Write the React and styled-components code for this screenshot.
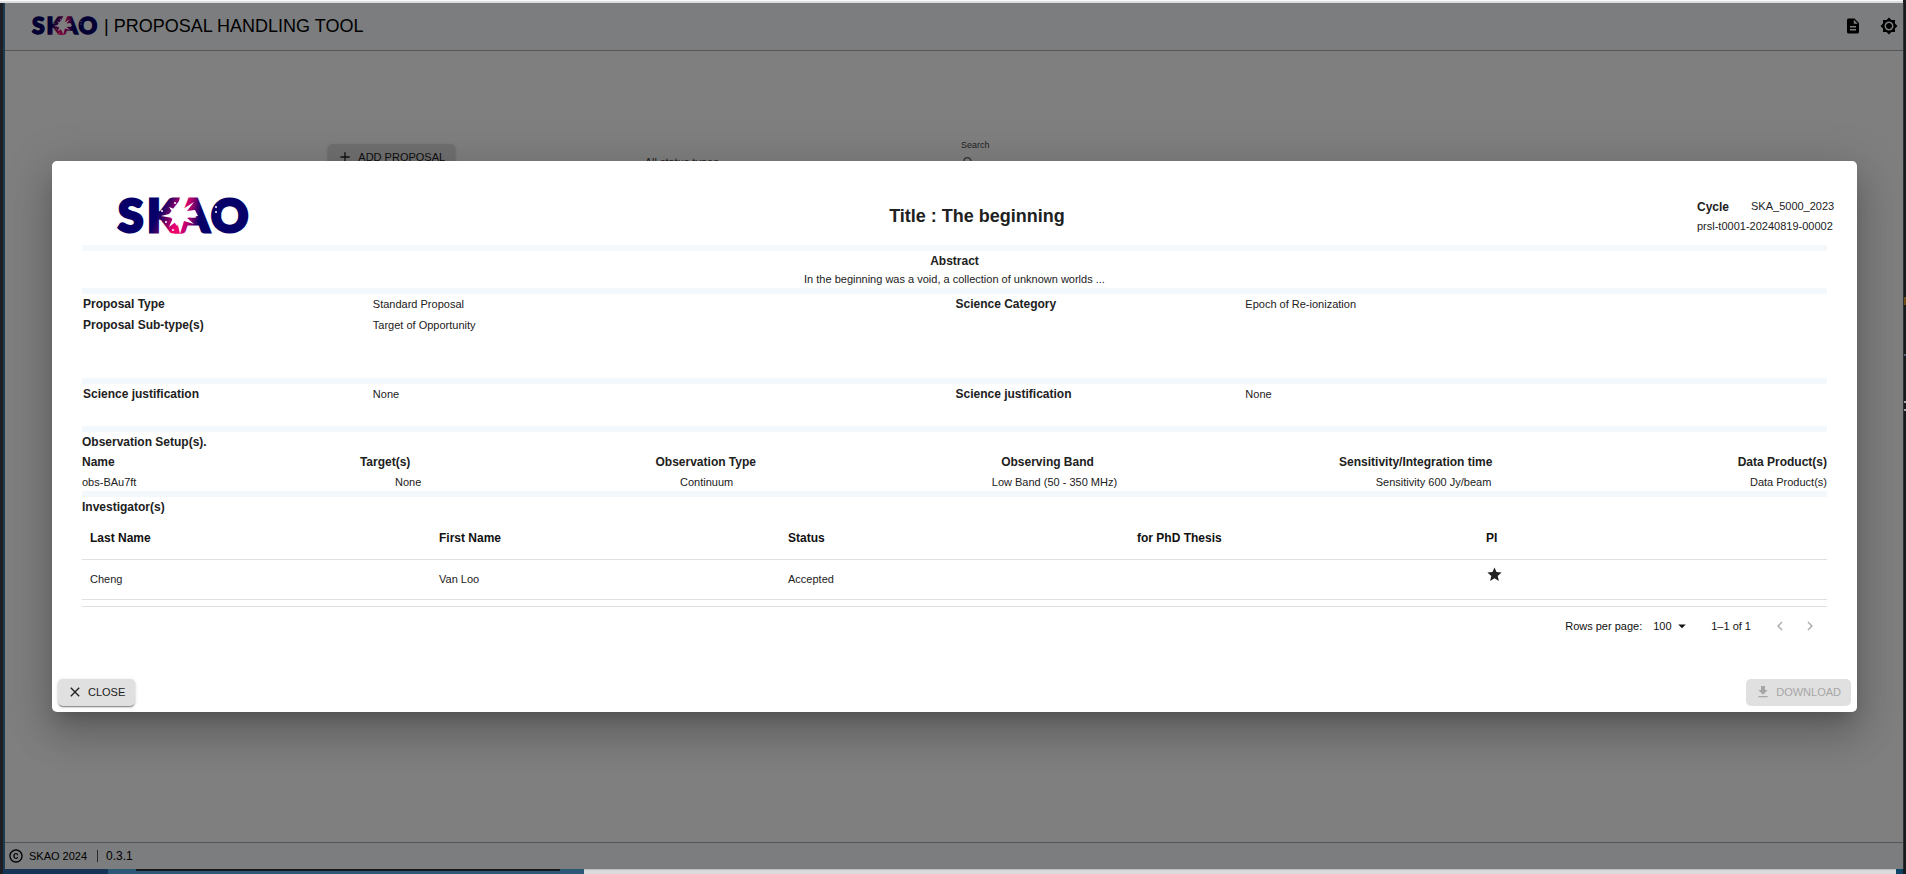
import React from 'react';
import styled, { createGlobalStyle } from 'styled-components';
import {
  MdAdd,
  MdArrowDropDown,
  MdBrightness7,
  MdChevronLeft,
  MdChevronRight,
  MdClose,
  MdCopyright,
  MdDescription,
  MdGetApp,
  MdSearch,
  MdStar,
} from 'react-icons/md';

const GlobalStyle = createGlobalStyle`
  *, *::before, *::after { box-sizing: border-box; }
  body {
    margin: 0;
    font-family: "Liberation Sans", Arial, sans-serif;
    font-size: 11px;
    color: #212121;
  }
  button, input, select { font: inherit; color: inherit; }
`;

/* Window frame around the app */
const Desktop = styled.div`
  display: grid;
  grid-template-columns: 5px minmax(0, 1fr) 3px;
  grid-template-rows: 3px minmax(0, 1fr) 5px;
  min-height: 100vh;
  background: #1d1f24;
`;

const TopEdge = styled.div`
  grid-column: 1 / 3;
  background: linear-gradient(#fafafa 1px, #dedede 1px);
`;

const LeftEdge = styled.div`
  grid-column: 1;
  grid-row: 2;
  border-right: 2px solid #1c3a50;
`;

const RightEdge = styled.div`
  grid-column: 3;
  grid-row: 2;
  background: linear-gradient(
    #181b1d 294px, #6b4d17 294px 302px, #181b1d 302px 351px,
    #56617a 351px 353px, #181b1d 353px 398px, #a5a5a5 398px 400px,
    #181b1d 400px 406px, #a5a5a5 406px 408px, #181b1d 408px
  );
  border-left: 1px solid #2a3033;
`;

const BottomEdge = styled.div`
  grid-column: 1 / -1;
  display: flex;
  padding-left: 3px;
`;

const EdgePart = styled.div`
  flex: ${(p) => (p.$width ? `0 0 ${p.$width}px` : '1')};
  background: ${(p) => p.$color};
`;

const TaskPart = styled(EdgePart)`
  padding: 0 24px 0 28px;
  &::before {
    content: '';
    display: block;
    height: 2px;
    background: #14181c;
  }
`;

/* Page */
const Page = styled.div`
  grid-column: 2;
  grid-row: 2;
  position: relative;
  display: flex;
  flex-direction: column;
  background: #fff;
  color: #000;
`;

const AppHeader = styled.header`
  display: flex;
  align-items: center;
  height: 48px;
  padding: 0 0 2px 27px;
  background: #f8fafc;
  border-bottom: 1px solid #aaa;
`;

const AppName = styled.h1`
  flex: 1;
  margin: 0 0 0 7px;
  font-size: 18px;
  line-height: 24px;
  font-weight: 400;
`;

const HeaderActions = styled.div`
  display: flex;
  gap: 8px;
`;

const IconButton = styled.button`
  display: inline-flex;
  align-items: center;
  justify-content: center;
  padding: 0;
  width: ${(p) => p.$size}px;
  height: ${(p) => p.$size}px;
  border: 0;
  background: none;
  color: ${(p) => (p.disabled ? '#b0b0b0' : 'inherit')};
`;

const Toolbar = styled.div`
  flex: 1;
  display: grid;
  grid-template-columns: repeat(6, minmax(0, 1fr));
  align-items: start;
  padding-top: 88px;
`;

const ToolbarCell = styled.div`
  grid-column: ${(p) => p.$column};
  padding: ${(p) => p.$top}px 8px 0 7px;
`;

const StatusSelect = styled.select`
  appearance: none;
  padding: 0;
  border: 0;
  background: none;
  line-height: 16px;
  color: #444;
`;

const SearchLabel = styled.label`
  display: block;
  font-size: 9px;
  line-height: 12px;
  color: #444;
`;

const SearchRow = styled.div`
  display: flex;
  align-items: center;
  padding-top: 4px;
  color: #666;
`;

const SearchInput = styled.input`
  width: 160px;
  border: 0;
  background: none;
`;

const Button = styled.button`
  display: inline-flex;
  align-items: center;
  gap: 5px;
  height: 27px;
  padding: 0 10px 1px 9px;
  border: 0;
  border-radius: 5px;
  background: #e0e0e0;
  color: ${(p) => (p.disabled ? '#a6a6a6' : '#212121')};
  text-transform: uppercase;
  box-shadow: ${(p) =>
    p.disabled
      ? 'none'
      : '0 2px 1px -1px rgba(0,0,0,.3), 0 1px 2px rgba(0,0,0,.2), 0 1px 4px rgba(0,0,0,.12)'};
`;

const AppFooter = styled.footer`
  display: flex;
  align-items: center;
  height: 27px;
  padding-left: 3px;
  background: #f8fafc;
  border-top: 1px solid #aaa;
`;

const Copyright = styled.span`
  margin: 0 10px 0 5px;
`;

const Version = styled.span`
  padding-left: 8px;
  border-left: 1px solid #555;
  font-size: 12px;
  line-height: 12px;
`;

/* Dialog */
const Backdrop = styled.div`
  position: absolute;
  inset: 0;
  display: flex;
  align-items: center;
  padding: 0 46px 0 47px;
  background: rgba(0, 0, 0, 0.5);
  color: #212121;
`;

const Dialog = styled.section`
  flex: 1;
  min-width: 0;
  background: #fff;
  border-radius: 5px;
  box-shadow: 0 11px 15px -7px rgba(0, 0, 0, 0.2),
    0 24px 38px 3px rgba(0, 0, 0, 0.14), 0 9px 46px 8px rgba(0, 0, 0, 0.12);
`;

const DialogBody = styled.div`
  padding: 26px 30px 34px;
`;

const DialogHeader = styled.div`
  display: flex;
  align-items: center;
  justify-content: space-between;
  height: 58px;
`;

const LogoBox = styled.div`
  display: flex;
  padding: 0 9px 0 36px;
`;

const LogoImage = styled.svg`
  overflow: visible;
`;

const DialogTitle = styled.h2`
  margin: 0;
  font-size: 18px;
  line-height: 24px;
  font-weight: 700;
`;

const Reference = styled.div`
  width: 130px;
  line-height: 18px;
  white-space: nowrap;
`;

const CycleRow = styled.div`
  display: flex;
  gap: 22px;
`;

const Rule = styled.hr`
  height: 6px;
  margin: 0;
  border: 0;
  background: #f3f8fd;
`;

const Heading = styled.h3`
  margin: 0;
  font-size: 12px;
  line-height: 20px;
  font-weight: 700;
`;

const Abstract = styled.div`
  text-align: center;
`;

const AbstractText = styled.p`
  margin: 0;
  line-height: 17px;
`;

const Details = styled.dl`
  display: grid;
  grid-template-columns: 2fr 4fr 2fr 4fr;
  align-content: start;
  height: ${(p) => p.$rows * 42}px;
  margin: 0;
  line-height: 21px;
`;

const Term = styled.dt`
  padding-left: 1px;
  font-size: 12px;
  font-weight: 700;
`;

const Value = styled.dd`
  margin: 0;
`;

const SetupTable = styled.table`
  display: block;
  thead, tbody { display: block; }
  tr { display: flex; justify-content: space-between; }
  th { padding: 0; font-size: 12px; line-height: 21px; }
  td { padding: 0; line-height: 18px; }
`;

const PeopleTable = styled.table`
  width: 100%;
  table-layout: fixed;
  border-collapse: separate;
  border-spacing: 0;
  border-bottom: 1px solid #e0e0e0;
  padding-bottom: 6px;
  text-align: left;
  th, td { padding: 0 8px; border-bottom: 1px solid #e0e0e0; }
  th { height: 43px; font-size: 12px; color: #111; }
  td { height: 40px; }
`;

const StarCell = styled.div`
  display: flex;
  padding-bottom: 9px;
`;

const Pagination = styled.div`
  display: flex;
  align-items: center;
  justify-content: flex-end;
  height: 38px;
  padding-right: 2px;
  color: #111;
`;

const PageSize = styled.div`
  display: flex;
  align-items: center;
  margin: 0 20px 0 11px;
`;

const PageSizeSelect = styled.select`
  appearance: none;
  width: 20px;
  padding: 0;
  border: 0;
  background: none;
`;

const Range = styled.span`
  margin-right: 14px;
`;

const DialogActions = styled.div`
  display: flex;
  justify-content: space-between;
  padding: 0 6px 6px;
`;

function Logo({ id, width }) {
  return (
    <LogoImage width={width} viewBox="0 0 130 36" role="img" aria-label="SKAO">
      <defs>
        <linearGradient id={`${id}-k`} gradientUnits="userSpaceOnUse" x1="40" y1="16" x2="62" y2="26">
          <stop offset="0" stopColor="#070068" />
          <stop offset="0.3" stopColor="#4a0365" />
          <stop offset="0.8" stopColor="#e6006e" />
          <stop offset="1" stopColor="#f0046c" />
        </linearGradient>
        <linearGradient id={`${id}-a`} gradientUnits="userSpaceOnUse" x1="64" y1="15" x2="82" y2="18">
          <stop offset="0" stopColor="#f0046c" />
          <stop offset="0.45" stopColor="#a8006c" />
          <stop offset="1" stopColor="#070068" />
        </linearGradient>
      </defs>
      <g fontFamily="Lato, 'Open Sans', sans-serif" fontWeight="900" fontSize="46" strokeWidth="3">
        <text x="0" y="34" fill="#070068" stroke="#070068">S</text>
        <text x="29" y="34" fill={`url(#${id}-k)`} stroke={`url(#${id}-k)`}>K</text>
        <text x="59" y="34" fill={`url(#${id}-a)`} stroke={`url(#${id}-a)`}>A</text>
        <text x="93" y="34" fill="#070068" stroke="#070068">O</text>
      </g>
      <path
        fill="#fff"
        d="M62 -1H67L65 11L76 4L69 13L77 12L80 18L69 20L76 26L66 23L62 36L59 23L51 29L55 20L43 18L55 15L51 9L59 12Z"
      />
      <g fill="#fff">
        <circle cx="57" cy="5" r="1" />
        <circle cx="44" cy="13" r="1" />
        <circle cx="55" cy="32" r="1" />
        <circle cx="98" cy="9" r="1" />
        <circle cx="98" cy="14" r="1" />
        <circle cx="48" cy="24" r="1" />
      </g>
    </LogoImage>
  );
}

const setupColumns = [
  ['Name', 'obs-BAu7ft'],
  ['Target(s)', 'None'],
  ['Observation Type', 'Continuum'],
  ['Observing Band', 'Low Band (50 - 350 MHz)'],
  ['Sensitivity/Integration time', 'Sensitivity 600 Jy/beam'],
  ['Data Product(s)', 'Data Product(s)'],
];

const peopleColumns = ['Last Name', 'First Name', 'Status', 'for PhD Thesis', 'PI'];

export default function App() {
  return (
    <Desktop>
      <GlobalStyle />
      <TopEdge />
      <LeftEdge />
      <Page>
        <AppHeader>
          <Logo id="app" width={65} />
          <AppName>| PROPOSAL HANDLING TOOL</AppName>
          <HeaderActions>
            <IconButton $size={28} aria-label="Documentation"><MdDescription size={18} /></IconButton>
            <IconButton $size={28} aria-label="Theme"><MdBrightness7 size={18} /></IconButton>
          </HeaderActions>
        </AppHeader>
        <Toolbar>
          <ToolbarCell $column={2} $top={5}>
            <Button><MdAdd size={16} />Add proposal</Button>
          </ToolbarCell>
          <ToolbarCell $column={3} $top={15}>
            <StatusSelect aria-label="Status">
              <option>All status types</option>
            </StatusSelect>
          </ToolbarCell>
          <ToolbarCell $column={4} $top={0}>
            <SearchLabel htmlFor="search">Search</SearchLabel>
            <SearchRow>
              <MdSearch size={16} />
              <SearchInput id="search" />
            </SearchRow>
          </ToolbarCell>
        </Toolbar>
        <AppFooter>
          <MdCopyright size={16} />
          <Copyright>SKAO 2024</Copyright>
          <Version>0.3.1</Version>
        </AppFooter>

        <Backdrop>
          <Dialog role="dialog" aria-modal="true" aria-labelledby="dialog-title">
            <DialogBody>
              <DialogHeader>
                <LogoBox><Logo id="dialog" width={130} /></LogoBox>
                <DialogTitle id="dialog-title">Title : The beginning</DialogTitle>
                <Reference>
                  <CycleRow>
                    <Heading as="span">Cycle</Heading>
                    <span>SKA_5000_2023</span>
                  </CycleRow>
                  <div>prsl-t0001-20240819-00002</div>
                </Reference>
              </DialogHeader>
              <Rule />
              <Abstract>
                <Heading>Abstract</Heading>
                <AbstractText>
                  In the beginning was a void, a collection of unknown worlds ...
                </AbstractText>
              </Abstract>
              <Rule />
              <Details $rows={2}>
                <Term>Proposal Type</Term>
                <Value>Standard Proposal</Value>
                <Term>Science Category</Term>
                <Value>Epoch of Re-ionization</Value>
                <Term>Proposal Sub-type(s)</Term>
                <Value>Target of Opportunity</Value>
              </Details>
              <Rule />
              <Details $rows={1}>
                <Term>Science justification</Term>
                <Value>None</Value>
                <Term>Science justification</Term>
                <Value>None</Value>
              </Details>
              <Rule />
              <Heading>Observation Setup(s).</Heading>
              <SetupTable>
                <thead>
                  <tr>{setupColumns.map(([name]) => <th key={name}>{name}</th>)}</tr>
                </thead>
                <tbody>
                  <tr>{setupColumns.map(([name, value]) => <td key={name}>{value}</td>)}</tr>
                </tbody>
              </SetupTable>
              <Rule />
              <Heading>Investigator(s)</Heading>
              <PeopleTable>
                <thead>
                  <tr>{peopleColumns.map((name) => <th key={name}>{name}</th>)}</tr>
                </thead>
                <tbody>
                  <tr>
                    <td>Cheng</td>
                    <td>Van Loo</td>
                    <td>Accepted</td>
                    <td />
                    <td><StarCell><MdStar size={17} aria-label="Principal investigator" /></StarCell></td>
                  </tr>
                </tbody>
              </PeopleTable>
              <Pagination>
                <label htmlFor="page-size">Rows per page:</label>
                <PageSize>
                  <PageSizeSelect id="page-size">
                    <option>100</option>
                  </PageSizeSelect>
                  <MdArrowDropDown size={18} />
                </PageSize>
                <Range>1–1 of 1</Range>
                <IconButton $size={30} disabled aria-label="Previous page"><MdChevronLeft size={18} /></IconButton>
                <IconButton $size={30} disabled aria-label="Next page"><MdChevronRight size={18} /></IconButton>
              </Pagination>
            </DialogBody>
            <DialogActions>
              <Button><MdClose size={16} />Close</Button>
              <Button disabled><MdGetApp size={16} />Download</Button>
            </DialogActions>
          </Dialog>
        </Backdrop>
      </Page>
      <RightEdge />
      <BottomEdge>
        <EdgePart $width={105} $color="#163556" />
        <TaskPart $width={476} $color="#2c5878" />
        <EdgePart $color="linear-gradient(#bdbdbd 1px, #dadada 1px)" />
        <EdgePart $width={7} $color="#0e4468" />
        <EdgePart $width={3} $color="#181b1d" />
      </BottomEdge>
    </Desktop>
  );
}
